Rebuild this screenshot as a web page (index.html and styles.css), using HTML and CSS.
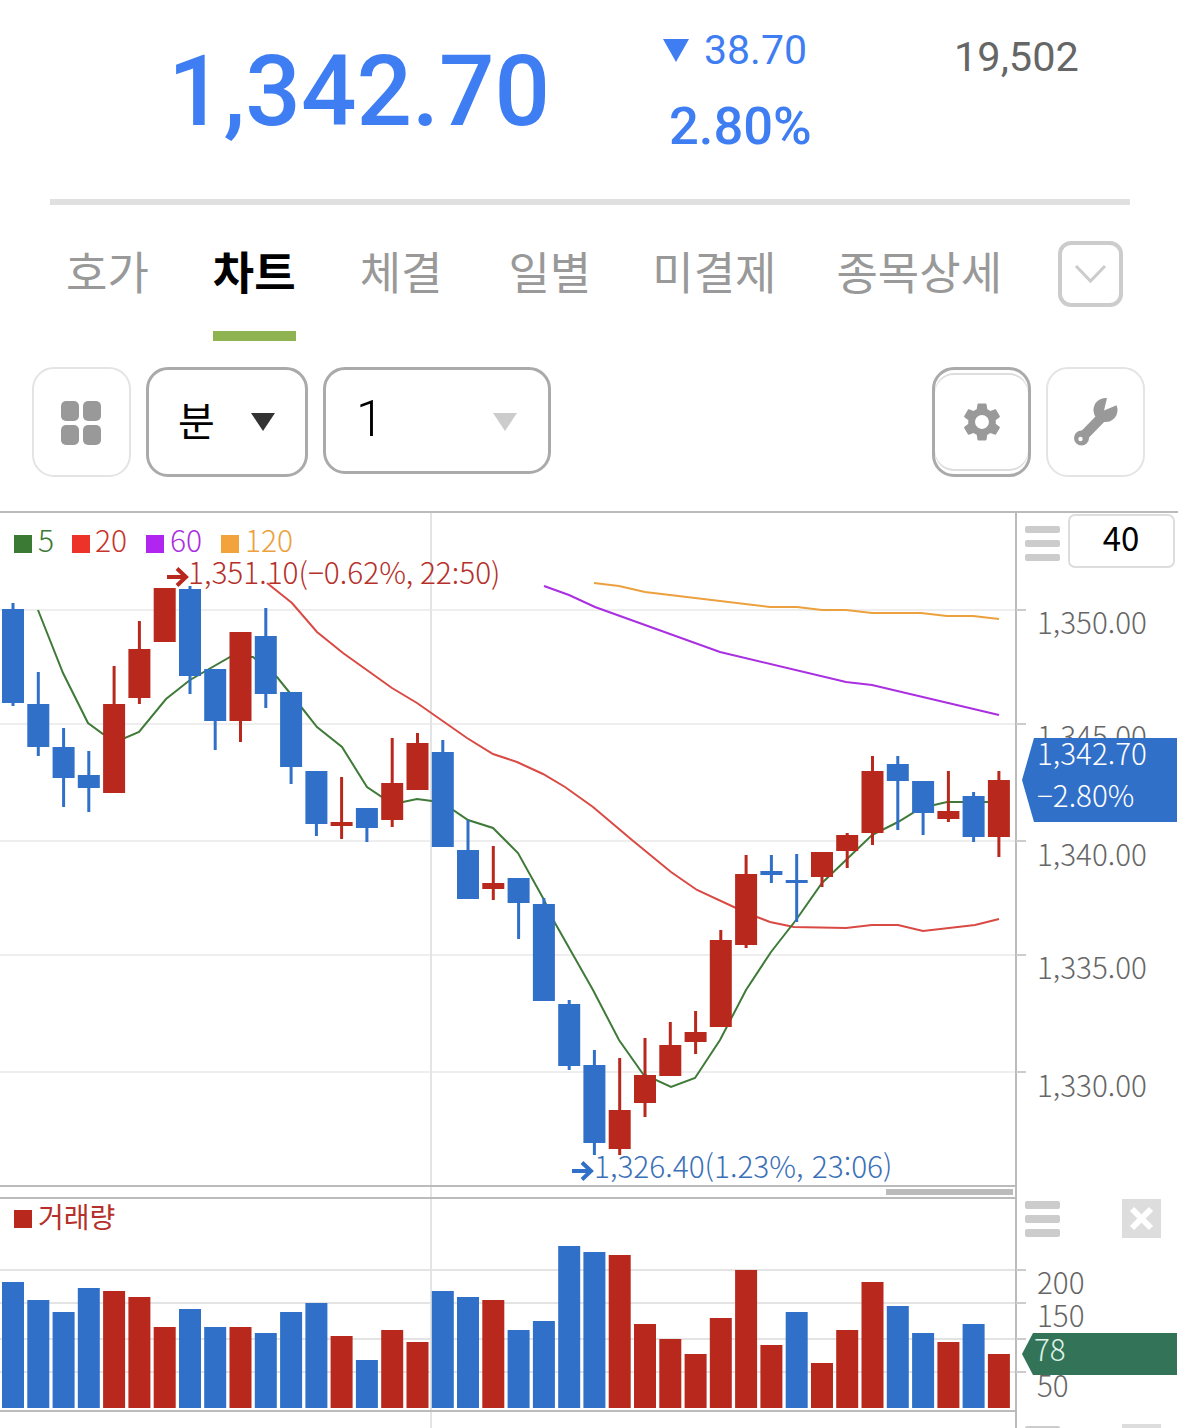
FILE: index.html
```html
<!DOCTYPE html>
<html lang="ko">
<head>
  <meta charset="UTF-8" />
  <meta name="viewport" content="width=device-width, initial-scale=1.0" />
  <title>차트</title>
  <link rel="stylesheet" href="styles.css">
</head>
<body>
  <header class="quote">
    <div class="quote-price">1,342.70</div>
    <div class="quote-change">
      <div class="change-amount"><span class="down-mark"></span>38.70</div>
      <div class="change-rate">2.80%</div>
    </div>
    <div class="quote-volume">19,502</div>
  </header>

  <nav class="tabs">
    <a class="tab">호가</a>
    <a class="tab active">차트</a>
    <a class="tab">체결</a>
    <a class="tab tab-daily">일별</a>
    <a class="tab tab-open">미결제</a>
    <a class="tab tab-detail">종목상세</a>
    <button class="more-btn">
      <svg width="33" height="20" viewBox="0 0 33 20"><path d="M2 2l14.500 15L31 2" fill="none" stroke="#ccc" stroke-width="3"/></svg>
    </button>
  </nav>

  <div class="toolbar">
    <button class="tool-btn">
      <span class="grid-icon"><i></i><i></i><i></i><i></i></span>
    </button>
    <div class="select select-unit">
      <span class="select-text">분</span>
      <span class="caret"></span>
    </div>
    <div class="select select-period">
      <span class="select-text">1</span>
      <span class="caret caret-off"></span>
    </div>
    <button class="tool-btn tool-btn-on">
      <svg width="46" height="46" viewBox="0 0 24 24"><path fill="#999" fill-rule="evenodd" d="M19.140 12.940c.04-.3.06-.61.06-.94 0-.32-.02-.64-.07-.94l2.030-1.580c.18-.14.23-.41.12-.61l-1.920-3.320c-.12-.22-.37-.29-.59-.22l-2.390.96c-.5-.38-1.030-.7-1.620-.94l-.36-2.540c-.04-.24-.24-.41-.48-.41h-3.840c-.24 0-.43.17-.47.41l-.36 2.540c-.59.24-1.130.57-1.620.94l-2.390-.96c-.22-.08-.47 0-.59.22L2.740 8.870c-.12.21-.08.47.12.61l2.030 1.580c-.05.3-.09.63-.09.94s.02.64.07.94l-2.030 1.580c-.18.14-.23.41-.12.61l1.920 3.320c.12.22.37.29.59.22l2.390-.96c.5.38 1.030.7 1.620.94l.36 2.540c.05.24.24.41.48.41h3.840c.24 0 .44-.17.47-.41l.36-2.540c.59-.24 1.130-.56 1.620-.94l2.390.96c.22.08.47 0 .59-.22l1.920-3.320c.12-.22.07-.47-.12-.61l-2.010-1.580zM12 15.600c-1.980 0-3.600-1.620-3.600-3.600s1.620-3.600 3.600-3.600 3.600 1.620 3.600 3.600-1.620 3.600-3.600 3.600z"/></svg>
    </button>
    <button class="tool-btn">
      <svg class="wrench" width="46" height="48" viewBox="0 0 46 48">
        <path class="wrench-handle" d="M9 39.500L30 18"/>
        <circle class="wrench-part" cx="8.500" cy="40" r="7.500"/>
        <circle class="wrench-part" cx="32.500" cy="12" r="12"/>
        <path class="wrench-cut" d="M31 12.500L34.500 -2H50V4.500z"/>
        <circle class="wrench-cut" cx="7.500" cy="41" r="2.200"/>
      </svg>
    </button>
  </div>

  <section class="chart">
    <!-- viewBox keeps the page's y values, so prices and rows read off the screenshot -->
    <svg class="chart-svg" width="1178" height="917" viewBox="0 511 1178 917">
      <g class="grid">
        <path d="M0 610H1016M0 724H1016M0 841H1016M0 955H1016M0 1072H1016"/>
        <path class="grid-strong" d="M0 1270H1016M0 1303H1016M0 1339H1016M0 1372H1016M431 511V1428"/>
      </g>
      <g class="frame">
        <path d="M0 512H1178M1016 511V1428M0 1186H1016M0 1198H1016M0 1411H1016"/>
        <path class="tick" d="M1016 610H1026M1016 724H1026M1016 841H1026M1016 955H1026M1016 1072H1026M1016 1270H1026M1016 1303H1026M1016 1339H1026M1016 1372H1026"/>
      </g>
      <rect class="scroll-thumb" x="886" y="1189" width="127" height="6"/>

      <polyline class="ma ma120" points="594,583 619,586 645,592 770,607 797,607 822,610 846,610 872,613 921,613 947,616 973,616 999,619"/>
      <polyline class="ma ma60" points="544,586 569,595 595,607 720,652 846,682 872,685 999,715"/>
      <polyline class="ma ma20" points="267,583 292,603 317,632 343,653 392,688 417,703 467,738 493,754 517,762 543,774 565,787 593,807 632,840 671,872 697,890 736,908 757,917 770,922 794,927 846,928 872,925 898,925 923,931 975,925 999,919"/>
      <polyline class="ma ma5" points="38,610 63,673 88,723 103,734 125,738 139,732 166,699 190,680 230,657 253,657 277,677 302,708 317,727 342,747 367,787 382,797 403,802 417,799 432,801 453,810 468,820 493,828 518,853 543,898 555,923 593,990 619,1040 643,1074 671,1087 695,1078 720,1040 746,990 771,952 796,920 822,883 846,860 872,835 898,822 921,808 947,802 988,802"/>

      <path class="wick blue" d="M13 603V706M38.300 672V756M63.600 728V807M88.800 751V812M190 586V694M215.200 669V750M265.800 608V708M291.100 692V784M316.400 771V836M366.900 808V842M442.800 740V847M468 820V899M518.600 878V939M543.900 898V1001M569.200 1000V1070M594.400 1050V1155M771.400 855V883M796.700 854V922M897.800 756V830M923.100 781V835M973.600 792V842"/>
      <path class="wick red" d="M114.100 666V704M139.400 621V704M240.500 632V742M341.600 777V839M392.200 738V827M417.500 733V790M493.300 846V900M619.700 1058V1155M645 1038V1117M670.300 1022V1076M695.600 1011V1054M720.800 930V1027M746.100 855V948M822 852V887M847.200 833V868M872.500 756V845M948.400 771V822M998.900 771V857"/>
      <path class="body blue" d="M2 609h22V703h-22zM27.300 704h22V747h-22zM52.600 747h22V778h-22zM77.800 775h22V788h-22zM179 589h22V676h-22zM204.200 669h22V721h-22zM254.800 636h22V694h-22zM280.100 692h22V767h-22zM305.400 771h22V824h-22zM355.900 808h22V828h-22zM431.800 752h22V847h-22zM457 850h22V899h-22zM507.600 878h22V903h-22zM532.900 904h22V1001h-22zM558.200 1004h22V1066h-22zM583.400 1065h22V1143h-22zM760.400 871h22V875h-22zM785.700 880h22V883h-22zM886.800 764h22V781h-22zM912.100 781h22V813h-22zM962.600 796h22V837h-22z"/>
      <path class="body red" d="M103.100 704h22V793h-22zM128.400 649h22V698h-22zM153.700 588h22V642h-22zM229.500 632h22V721h-22zM330.600 822h22V826h-22zM381.200 783h22V820h-22zM406.500 743h22V790h-22zM482.300 883h22V889h-22zM608.700 1110h22V1149h-22zM634 1075h22V1103h-22zM659.300 1045h22V1076h-22zM684.600 1032h22V1042h-22zM709.800 940h22V1027h-22zM735.100 874h22V945h-22zM811 852h22V877h-22zM836.200 835h22V851h-22zM861.500 771h22V833h-22zM937.400 811h22V819h-22zM987.900 780h22V837h-22z"/>

      <rect class="swatch-5" x="14" y="535" width="18" height="18"/>
      <text class="label legend label-5" x="38" y="552">5</text>
      <rect class="swatch-20" x="72" y="535" width="18" height="18"/>
      <text class="label legend label-20" x="95" y="552">20</text>
      <rect class="swatch-60" x="146" y="535" width="18" height="18"/>
      <text class="label legend label-60" x="170" y="552">60</text>
      <rect class="swatch-120" x="221" y="535" width="18" height="18"/>
      <text class="label legend label-120" x="245" y="552">120</text>

      <path class="arrow arrow-red" d="M167 577H185M177 568.500l9 8.500-9 8.500"/>
      <text class="label note note-high" x="188" y="584">1,351.10(−0.62%, 22:50)</text>
      <path class="arrow arrow-blue" d="M572 1171H590M582 1162.500l9 8.500-9 8.500"/>
      <text class="label note note-low" x="594" y="1178">1,326.40(1.23%, 23:06)</text>

      <g class="menu-icon">
        <rect x="1025" y="526" width="35" height="7" rx="2"/>
        <rect x="1025" y="540" width="35" height="7" rx="2"/>
        <rect x="1025" y="554" width="35" height="7" rx="2"/>
        <rect x="1025" y="1201" width="35" height="8" rx="2"/>
        <rect x="1025" y="1215" width="35" height="8" rx="2"/>
        <rect x="1025" y="1229" width="35" height="8" rx="2"/>
        <rect x="1025" y="1426" width="35" height="8" rx="2"/>
      </g>
      <rect class="count-box" x="1069" y="515" width="105" height="52" rx="6"/>
      <text class="count-text" x="1121" y="551">40</text>

      <text class="label axis" x="1037" y="634">1,350.00</text>
      <text class="label axis" x="1037" y="748">1,345.00</text>
      <text class="label axis" x="1037" y="866">1,340.00</text>
      <text class="label axis" x="1037" y="979">1,335.00</text>
      <text class="label axis" x="1037" y="1097">1,330.00</text>

      <path class="tag-blue" d="M1034 738H1177V822H1034L1022 780z"/>
      <text class="label tag-text" x="1037" y="765">1,342.70</text>
      <text class="label tag-text" x="1037" y="807">−2.80%</text>

      <rect class="swatch-vol" x="14" y="1210" width="18" height="18"/>
      <text class="label label-vol" x="38" y="1228">거래량</text>

      <path class="body blue" d="M2 1282h22V1408h-22zM27.300 1300h22V1408h-22zM52.600 1312h22V1408h-22zM77.800 1288h22V1408h-22zM179 1309h22V1408h-22zM204.200 1327h22V1408h-22zM254.800 1333h22V1408h-22zM280.100 1312h22V1408h-22zM305.400 1303h22V1408h-22zM355.900 1360h22V1408h-22zM431.800 1291h22V1408h-22zM457 1297h22V1408h-22zM507.600 1330h22V1408h-22zM532.900 1321h22V1408h-22zM558.200 1246h22V1408h-22zM583.400 1252h22V1408h-22zM785.700 1312h22V1408h-22zM886.800 1306h22V1408h-22zM912.100 1333h22V1408h-22zM962.600 1324h22V1408h-22z"/>
      <path class="body red" d="M103.100 1291h22V1408h-22zM128.400 1297h22V1408h-22zM153.700 1327h22V1408h-22zM229.500 1327h22V1408h-22zM330.600 1336h22V1408h-22zM381.200 1330h22V1408h-22zM406.500 1342h22V1408h-22zM482.300 1300h22V1408h-22zM608.700 1255h22V1408h-22zM634 1324h22V1408h-22zM659.300 1339h22V1408h-22zM684.600 1354h22V1408h-22zM709.800 1318h22V1408h-22zM735.100 1270h22V1408h-22zM760.400 1345h22V1408h-22zM811 1363h22V1408h-22zM836.200 1330h22V1408h-22zM861.500 1282h22V1408h-22zM937.400 1342h22V1408h-22zM987.900 1354h22V1408h-22z"/>

      <rect class="close-box" x="1122" y="1199" width="39" height="39"/>
      <path class="close-mark" d="M1132 1209l19 19M1151 1209l-19 19"/>
      <rect class="close-box" x="1122" y="1424" width="39" height="10"/>

      <text class="label axis" x="1037" y="1294">200</text>
      <text class="label axis" x="1037" y="1327">150</text>
      <text class="label axis" x="1037" y="1397">50</text>
      <path class="tag-green" d="M1033 1333H1177V1375H1033L1022 1354z"/>
      <text class="label tag-text-vol" x="1034" y="1361">78</text>
    </svg>
  </section>
</body>
</html>
```

FILE: styles.css
```css
body {
  margin: 0;
  background: #fff;
  font-family: Roboto, "Noto Sans CJK KR", sans-serif;
  overflow: hidden;
}

/* quote header */
.quote {
  display: flex;
  align-items: flex-start;
  height: 199px;
  margin: 0 48px 0 50px;
  border-bottom: 6px solid #e0e0e0;
  color: #3f7ef2;
}

.quote-price {
  width: 490px;
  padding-left: 118px;
  box-sizing: border-box;
  font-size: 97.700px;
  font-weight: 500;
  line-height: 115px;
  margin-top: 34px;
}

.quote-change {
  width: 286px;
  padding-left: 124px;
  margin-left: -1px;
}

.change-amount {
  display: flex;
  align-items: center;
  font-size: 41px;
  line-height: 48px;
  margin-top: 26px;
}

.down-mark {
  width: 0;
  height: 0;
  margin-right: 15px;
  border-left: 13px solid transparent;
  border-right: 13px solid transparent;
  border-top: 23px solid #3f7ef2;
}

.change-rate {
  font-size: 52.500px;
  font-weight: 500;
  line-height: 60px;
  margin-top: 22px;
  padding-left: 6px;
}

.quote-volume {
  margin-top: 33px;
  margin-left: 5px;
  font-size: 41.500px;
  line-height: 48px;
  color: #666;
}

/* tabs */
.tabs {
  display: flex;
  align-items: flex-start;
  gap: 64px;
  padding: 36px 0 0 66px;
  font-family: "Noto Sans CJK KR", sans-serif;
}

.tab {
  font-size: 45px;
  line-height: 60px;
  color: #999;
  padding-bottom: 30px;
  border-bottom: 10px solid transparent;
}

.tab.active {
  color: #000;
  font-weight: 700;
  border-bottom-color: #8fb350;
}

.tab-daily {
  margin-left: 2px;
}

.tab-open {
  margin-left: -3px;
}

.tab-detail {
  margin-left: -4px;
}

.more-btn {
  display: flex;
  align-items: center;
  justify-content: center;
  width: 65px;
  height: 66px;
  margin: 0 0 0 -8px;
  padding: 0;
  background: #fff;
  border: 4px solid #ccc;
  border-radius: 13px;
}

/* toolbar */
.toolbar {
  display: flex;
  align-items: flex-start;
  gap: 15px;
  height: 144px;
  padding: 26px 33px 0 32px;
  font-family: "Noto Sans CJK KR", sans-serif;
}

.tool-btn {
  display: flex;
  align-items: center;
  justify-content: center;
  box-sizing: border-box;
  width: 99px;
  height: 110px;
  padding: 0;
  background: #fff;
  border: 2px solid #e4e4e4;
  border-radius: 22px;
}

.tool-btn-on {
  margin-left: auto;
  border: 3px solid #aaa;
  box-shadow: inset 0 3px 0 #fff, inset 0 5px 0 #ddd, inset 0 -3px 0 #fff, inset 0 -5px 0 #ddd;
}

.grid-icon {
  display: grid;
  grid-template-columns: 18px 18px;
  grid-template-rows: 20px 20px;
  gap: 4px;
  margin: 1px 2px 0 0;
}

.grid-icon i {
  background: #999;
  border-radius: 5px;
}

.wrench {
  overflow: hidden;
}

.wrench-part {
  fill: #999;
}

.wrench-handle {
  fill: none;
  stroke: #999;
  stroke-width: 10;
}

.wrench-cut {
  fill: #fff;
}

.select {
  display: flex;
  align-items: center;
  justify-content: space-between;
  box-sizing: border-box;
  border: 3px solid #aaa;
  border-radius: 22px;
  color: #000;
}

.select-unit {
  width: 162px;
  height: 110px;
  padding: 0 30px 0 29px;
}

.select-period {
  width: 228px;
  height: 107px;
  padding: 0 31px 0 30px;
}

.select-text {
  font-size: 40px;
  line-height: 50px;
  margin-bottom: 6px;
}

.select-period .select-text {
  font-family: Roboto, sans-serif;
  font-size: 50px;
  font-weight: 300;
  margin-bottom: 4px;
}

.caret {
  width: 0;
  height: 0;
  border-left: 12px solid transparent;
  border-right: 12px solid transparent;
  border-top: 18px solid #333;
}

.caret-off {
  border-top-color: #ccc;
  margin-top: 2px;
}

/* chart */
.chart {
  height: 917px;
}

.chart-svg {
  display: block;
}

.grid path {
  fill: none;
  stroke: #eee;
  stroke-width: 2;
}

.grid .grid-strong {
  stroke: #e4e4e4;
}

.frame path {
  fill: none;
  stroke: #bbb;
  stroke-width: 2;
}

.frame .tick {
  stroke: #ccc;
}

.scroll-thumb {
  fill: #bbb;
}

.ma {
  fill: none;
  stroke-width: 2;
}

.ma5 { stroke: #3f7a38; }
.ma20 { stroke: #d94a44; }
.ma60 { stroke: #a92fe0; }
.ma120 { stroke: #eca03e; }

.wick {
  fill: none;
  stroke-width: 3;
}

.wick.blue { stroke: #3070c8; }
.wick.red { stroke: #b9281c; }
.body.blue { fill: #3070c8; }
.body.red { fill: #b9281c; }

.label {
  font-family: "Noto Sans CJK KR", sans-serif;
  font-size: 29.600px;
  font-weight: 300;
}

.legend {
  font-size: 30px;
}

.note {
  font-size: 29.800px;
}

.swatch-5 { fill: #3b7a35; }
.swatch-20 { fill: #ec3229; }
.swatch-60 { fill: #b026f0; }
.swatch-120 { fill: #f2a33c; }
.swatch-vol { fill: #b9281c; }

.label-5 { fill: #3b7a35; }
.label-20 { fill: #c8352c; }
.label-60 { fill: #a92fe0; }
.label-120 { fill: #eca03e; }
.label-vol { fill: #b5302a; font-size: 28px; font-weight: 400; }

.note-high { fill: #b5302a; }
.note-low { fill: #3a70b8; }

.arrow {
  fill: none;
  stroke-width: 4;
}

.arrow-red { stroke: #b9281c; }
.arrow-blue { stroke: #3070c8; }

.menu-icon rect {
  fill: #ccc;
}

.count-box {
  fill: #fff;
  stroke: #ddd;
  stroke-width: 2;
}

.count-text {
  font-family: "Noto Sans CJK KR", sans-serif;
  font-size: 33px;
  text-anchor: middle;
  fill: #000;
}

.axis {
  fill: #666;
}

.tag-blue { fill: #3070c8; }
.tag-green { fill: #337358; }
.tag-text { fill: #fff; }
.tag-text-vol { fill: #dff3e8; }

.close-box { fill: #ddd; }

.close-mark {
  fill: none;
  stroke: #fff;
  stroke-width: 6;
}
```
